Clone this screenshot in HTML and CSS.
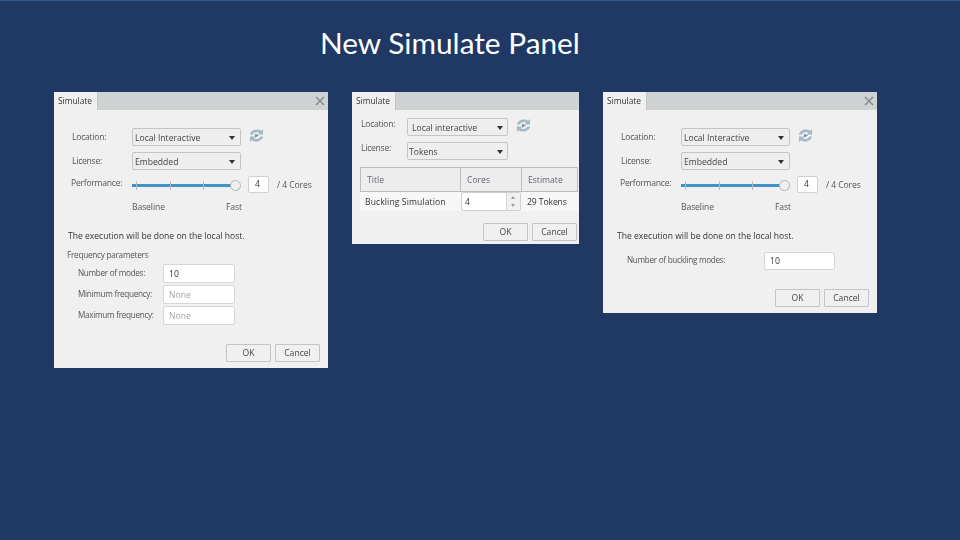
FILE: index.html
```html
<!DOCTYPE html>
<html lang="en">
<head>
<meta charset="utf-8">
<title>New Simulate Panel</title>
<link rel="stylesheet" href="styles.css">
</head>
<body>
<main class="slide">
  <h1 class="title">New Simulate Panel</h1>

  <section class="dialog dialog-a">
    <header class="head"><span class="tab">Simulate</span><svg class="close" viewBox="0 0 10 10"><path d="M1 1l8 8M9 1l-8 8"/></svg></header>
    <div class="body body-wide">
      <div class="row row-first"><span class="lbl">Location:</span><span class="select">Local Interactive<i class="caret"></i></span><svg class="sync" viewBox="0 0 16 16"><path class="sync-a" d="M1 7C2 2 9 0 13 3L15 1V7H9L11 5C9 3.500 5 4 4 7Z"/><path class="sync-a" d="M15 9C14 14 7 16 3 13L1 15V9H7L5 11C7 12.500 11 12 12 9Z"/><path class="sync-b" d="M6.500 6L10.500 8L6.500 10Z"/></svg></div>
      <div class="row"><span class="lbl">License:</span><span class="select">Embedded<i class="caret"></i></span></div>
      <div class="row perf"><span class="lbl lbl-perf">Performance:</span><span class="slider"><i class="tick t1"></i><i class="tick t2"></i><i class="tick t3"></i><i class="knob"></i></span><span class="num">4</span><span class="cores">/ 4 Cores</span></div>
      <div class="scale"><span>Baseline</span><span>Fast</span></div>
      <p class="note">The execution will be done on the local host.</p>
      <p class="group">Frequency parameters</p>
      <div class="param"><span class="plbl">Number of modes:</span><span class="field">10</span></div>
      <div class="param"><span class="plbl">Minimum frequency:</span><span class="field empty">None</span></div>
      <div class="param"><span class="plbl">Maximum frequency:</span><span class="field empty">None</span></div>
      <div class="actions actions-a"><span class="btn">OK</span><span class="btn">Cancel</span></div>
    </div>
  </section>

  <section class="dialog dialog-b">
    <header class="head"><span class="tab">Simulate</span></header>
    <div class="body">
      <div class="row row-b1"><span class="lbl lbl-b">Location:</span><span class="select select-b">Local interactive<i class="caret"></i></span><svg class="sync" viewBox="0 0 16 16"><path class="sync-a" d="M1 7C2 2 9 0 13 3L15 1V7H9L11 5C9 3.500 5 4 4 7Z"/><path class="sync-a" d="M15 9C14 14 7 16 3 13L1 15V9H7L5 11C7 12.500 11 12 12 9Z"/><path class="sync-b" d="M6.500 6L10.500 8L6.500 10Z"/></svg></div>
      <div class="row row-b2"><span class="lbl lbl-b">License:</span><span class="select select-b select-tokens">Tokens<i class="caret"></i></span></div>
      <div class="table">
        <div class="thead"><span class="th th1">Title</span><span class="th th2">Cores</span><span class="th th3">Estimate</span></div>
        <div class="tbody"><span class="td1">Buckling Simulation</span><span class="spin">4<span class="arrows"><i class="up"></i><i class="down"></i></span></span><span class="td3">29 Tokens</span></div>
      </div>
      <div class="actions actions-b"><span class="btn">OK</span><span class="btn">Cancel</span></div>
    </div>
  </section>

  <section class="dialog dialog-c">
    <header class="head"><span class="tab">Simulate</span><svg class="close" viewBox="0 0 10 10"><path d="M1 1l8 8M9 1l-8 8"/></svg></header>
    <div class="body body-wide">
      <div class="row row-first"><span class="lbl">Location:</span><span class="select">Local Interactive<i class="caret"></i></span><svg class="sync" viewBox="0 0 16 16"><path class="sync-a" d="M1 7C2 2 9 0 13 3L15 1V7H9L11 5C9 3.500 5 4 4 7Z"/><path class="sync-a" d="M15 9C14 14 7 16 3 13L1 15V9H7L5 11C7 12.500 11 12 12 9Z"/><path class="sync-b" d="M6.500 6L10.500 8L6.500 10Z"/></svg></div>
      <div class="row"><span class="lbl">License:</span><span class="select">Embedded<i class="caret"></i></span></div>
      <div class="row perf"><span class="lbl lbl-perf">Performance:</span><span class="slider"><i class="tick t1"></i><i class="tick t2"></i><i class="tick t3"></i><i class="knob"></i></span><span class="num">4</span><span class="cores">/ 4 Cores</span></div>
      <div class="scale"><span>Baseline</span><span>Fast</span></div>
      <p class="note">The execution will be done on the local host.</p>
      <div class="param param-c"><span class="plbl plbl-c">Number of buckling modes:</span><span class="field field-c">10</span></div>
      <div class="actions actions-c"><span class="btn">OK</span><span class="btn">Cancel</span></div>
    </div>
  </section>
</main>
</body>
</html>
```
FILE: styles.css
```css
* { box-sizing: border-box; }
html, body { margin: 0; padding: 0; }
body { width: 960px; height: 540px; overflow: hidden; background: #1f3864; }
.slide { position: relative; width: 960px; height: 540px; background: #1f3864; border-top: 1px solid #2f5589; font-family: "Open Sans", sans-serif; }
.title { position: absolute; left: 320px; top: 25px; margin: 0; font: 400 29.800px/34px Lato, "Open Sans", sans-serif; color: #fff; white-space: nowrap; }

.dialog { position: absolute; top: 91px; background: #f0f0f0; color: #444; font-size: 8.600px; line-height: 12px; filter: blur(.3px); white-space: nowrap; }
.dialog-a { left: 54px; width: 274px; height: 276px; }
.dialog-b { left: 352px; width: 227px; height: 152px; }
.dialog-c { left: 603px; width: 274px; height: 221px; }

.head { height: 18px; background: #cfd2d3; display: flex; align-items: center; justify-content: space-between; }
.tab { width: 44px; height: 18px; background: #f0f0f0; padding: 3px 0 0 4px; color: #333; font-size: 8.400px; border-right: 1px solid #c4c6c7; }
.close { width: 10px; height: 10px; margin-right: 3px; }
.close path { stroke: #85898c; stroke-width: 1.400; fill: none; }

.body { position: relative; display: flow-root; }
.body-wide { padding-left: 18px; }
.row { display: flex; align-items: center; height: 18px; margin-top: 6px; }
.row-first { margin-top: 18px; }
.lbl { width: 60px; color: #555; letter-spacing: -.25px; }
.select { position: relative; width: 109px; height: 18px; line-height: 19px; padding-left: 2px; border: 1px solid #c5c5c5; border-radius: 2px; background: #eeeeee; color: #444; font-size: 8.600px; }
.caret { position: absolute; right: 5px; top: 7px; border-left: 3px solid transparent; border-right: 3px solid transparent; border-top: 4px solid #333; }
.sync { width: 15px; height: 15px; margin-left: 8px; position: relative; top: -2px; }
.sync-a { fill: #a3bac5; }
.sync-b { fill: #6f8c9b; }

.perf { margin-top: 6px; height: 18px; position: relative; }
.lbl-perf { margin-left: -1px; width: 61px; top: -2px; position: relative; }
.slider { position: relative; width: 109px; height: 16px; }
.slider::before { content: ""; position: absolute; left: 0; top: 7px; width: 100px; height: 3px; background: #3f94cc; }
.tick { position: absolute; top: 4px; width: 1px; height: 9px; background: #b4bcc2; }
.t1 { left: 4px; } .t2 { left: 38px; } .t3 { left: 71px; }
.knob { position: absolute; right: 0; top: 3px; width: 11px; height: 11px; border-radius: 50%; border: 1px solid #b3b3b3; background: #f0f0f0; }
.num { width: 21px; height: 17px; margin-left: 7px; background: #fff; border: 1px solid #d0d0d0; border-radius: 2px; padding-left: 6px; line-height: 15px; color: #333; position: relative; top: -1px; }
.cores { margin-left: 8px; color: #555; letter-spacing: -.1px; }
.scale { margin: 7px 0 0 60px; width: 110px; display: flex; justify-content: space-between; color: #555; letter-spacing: -.1px; }

.note { margin: 17px 0 0 -4px; color: #333; font-size: 8.550px; }
.group { margin: 7px 0 0 -5px; color: #555; font-size: 8.200px; letter-spacing: -.25px; }
.param { display: flex; align-items: center; height: 19px; margin: 2px 0 0 6px; }
.group + .param { margin-top: 3px; }
.plbl { width: 85px; color: #555; font-size: 8.200px; letter-spacing: -.3px; position: relative; top: -1px; }
.field { width: 72px; height: 19px; background: #fff; border: 1px solid #d6d6d6; border-radius: 2px; padding-left: 5px; line-height: 18px; color: #333; }
.empty { color: #a5a5a5; }
.param-c { margin: 9px 0 0 6px; }
.plbl-c { width: 137px; }
.field-c { width: 71px; height: 18px; line-height: 17px; }

.actions { position: absolute; display: flex; gap: 4px; }
.actions-a { right: 8px; top: 234px; }
.actions-c { right: 8px; top: 179px; }
.actions-b { right: 2px; top: 113px; }
.btn { width: 45px; height: 18px; text-align: center; line-height: 17px; border: 1px solid #c4c4c4; background: #f0f0f0; border-radius: 1px; color: #444; }

.row-b1 { margin-top: 8px; padding-left: 9px; }
.row-b2 { margin-top: 6px; padding-left: 9px; }
.lbl-b { width: 46px; position: relative; top: -3px; }
.select-b { width: 101px; padding-left: 4px; }
.select-tokens { padding-left: 1px; }
.select-b .caret { right: 4px; }
.table { margin: 7px 0 0 8px; width: 218px; }
.thead { display: flex; height: 25px; border: 1px solid #b9bec1; background: #ededed; }
.th { color: #667; line-height: 25px; padding-left: 6px; }
.th1 { width: 99px; }
.th2 { width: 61px; border-left: 1px solid #b9bec1; }
.th3 { flex: 1; border-left: 1px solid #b9bec1; }
.tbody { display: flex; align-items: center; height: 19px; background: #f7f7f7; }
.td1 { width: 101px; padding-left: 5px; color: #333; letter-spacing: .1px; }
.spin { position: relative; width: 60px; height: 19px; background: #fff; border: 1px solid #d0d0d0; border-radius: 2px; padding-left: 3px; line-height: 18px; color: #333; }
.arrows { position: absolute; right: 0; top: 0; bottom: 0; width: 14px; background: #f0f0f0; border-left: 1px solid #d5d5d5; }
.up, .down { position: absolute; left: 4px; border-left: 2.500px solid transparent; border-right: 2.500px solid transparent; }
.up { top: 3px; border-bottom: 3px solid #9a9a9a; }
.down { bottom: 3px; border-top: 3px solid #9a9a9a; }
.td3 { margin-left: 6px; color: #333; letter-spacing: -.1px; }
```
